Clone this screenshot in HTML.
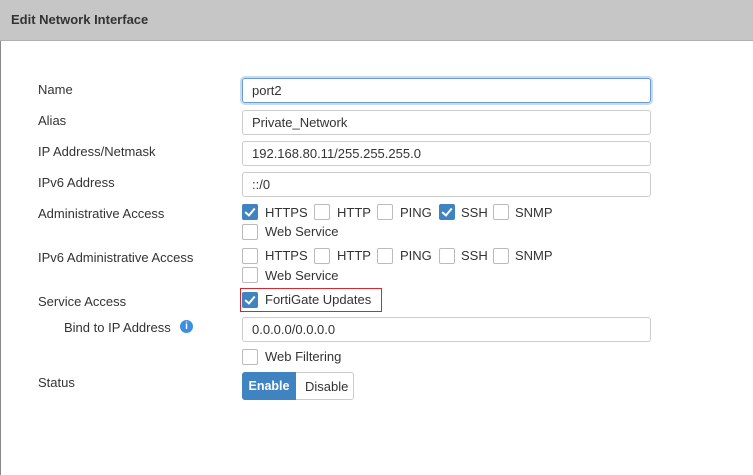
<!DOCTYPE html><html><head><style>
body{margin:0;width:753px;height:475px;background:#fff;font-family:"Liberation Sans",sans-serif;font-size:13px;color:#333;position:relative;overflow:hidden}
.hdr{position:absolute;left:0;top:0;width:753px;height:40px;background:#c6c6c6;border-bottom:1px solid #b0b0b0}
.hdr span{position:absolute;left:11px;top:12px;font-size:13px;font-weight:bold;color:#333}
.a{position:absolute;white-space:nowrap}
.in{position:absolute;left:242px;width:398px;height:23px;border:1px solid #ccc;border-radius:3px;padding-left:9px;line-height:23px;box-sizing:content-box}
.cb{position:absolute;width:14px;height:14px;border:1px solid #bbb;border-radius:2px;background:#fff}
.cb.on{background:#3f83c1;border-color:#3f83c1}
.cb.on:after{content:"";position:absolute;left:4px;top:1px;width:4px;height:8px;border:solid #fff;border-width:0 2px 2px 0;transform:rotate(40deg)}
</style></head><body>
<div class="hdr"><span>Edit Network Interface</span></div>
<div style="position:absolute;left:0;top:41px;width:1px;height:434px;background:#888"></div>
<div class="a" style="left:38px;top:82px">Name</div>
<div class="in" style="top:78px;border-color:#6a9ad0;box-shadow:0 0 0 2px #c8daf0;width:398px">port2</div>
<div class="a" style="left:38px;top:113px">Alias</div>
<div class="in" style="top:110px">Private_Network</div>
<div class="a" style="left:38px;top:144px">IP Address/Netmask</div>
<div class="in" style="top:141px">192.168.80.11/255.255.255.0</div>
<div class="a" style="left:38px;top:175px">IPv6 Address</div>
<div class="in" style="top:172px">::/0</div>
<div class="a" style="left:38px;top:206px">Administrative Access</div>
<div class="cb on" style="left:242px;top:204px"></div><div class="a" style="left:265px;top:205px">HTTPS</div>
<div class="cb" style="left:314px;top:204px"></div><div class="a" style="left:337px;top:205px">HTTP</div>
<div class="cb" style="left:377px;top:204px"></div><div class="a" style="left:400px;top:205px">PING</div>
<div class="cb on" style="left:439px;top:204px"></div><div class="a" style="left:461px;top:205px">SSH</div>
<div class="cb" style="left:493px;top:204px"></div><div class="a" style="left:515px;top:205px">SNMP</div>
<div class="cb" style="left:242px;top:224px"></div><div class="a" style="left:265px;top:224px">Web Service</div>
<div class="a" style="left:38px;top:250px">IPv6 Administrative Access</div>
<div class="cb" style="left:242px;top:248px"></div><div class="a" style="left:265px;top:248px">HTTPS</div>
<div class="cb" style="left:314px;top:248px"></div><div class="a" style="left:337px;top:248px">HTTP</div>
<div class="cb" style="left:377px;top:248px"></div><div class="a" style="left:400px;top:248px">PING</div>
<div class="cb" style="left:439px;top:248px"></div><div class="a" style="left:461px;top:248px">SSH</div>
<div class="cb" style="left:493px;top:248px"></div><div class="a" style="left:515px;top:248px">SNMP</div>
<div class="cb" style="left:242px;top:267px"></div><div class="a" style="left:265px;top:268px">Web Service</div>
<div class="a" style="left:38px;top:294px">Service Access</div>
<div style="position:absolute;left:240px;top:288px;width:140px;height:22px;border:1px solid #d9272e"></div>
<div class="cb on" style="left:242px;top:292px"></div><div class="a" style="left:265px;top:292px">FortiGate Updates</div>
<div class="a" style="left:64px;top:320px">Bind to IP Address</div>
<div style="position:absolute;left:180px;top:320px;width:13px;height:13px;border-radius:50%;background:#3f8fe0;color:#fff;font-size:10px;font-weight:bold;text-align:center;line-height:13px">i</div>
<div class="in" style="top:317px">0.0.0.0/0.0.0.0</div>
<div class="cb" style="left:242px;top:349px"></div><div class="a" style="left:265px;top:349px">Web Filtering</div>
<div class="a" style="left:38px;top:375px">Status</div>
<div style="position:absolute;left:242px;top:372px;width:112px;height:28px;border:1px solid #ccc;border-radius:3px;box-sizing:border-box"></div>
<div style="position:absolute;left:242px;top:372px;width:54px;height:28px;background:#3f83c1;border-radius:3px 0 0 3px;color:#fff;font-weight:bold;text-align:center;line-height:28px;font-size:12.5px">Enable</div>
<div class="a" style="left:305px;top:379px">Disable</div>
</body></html>
